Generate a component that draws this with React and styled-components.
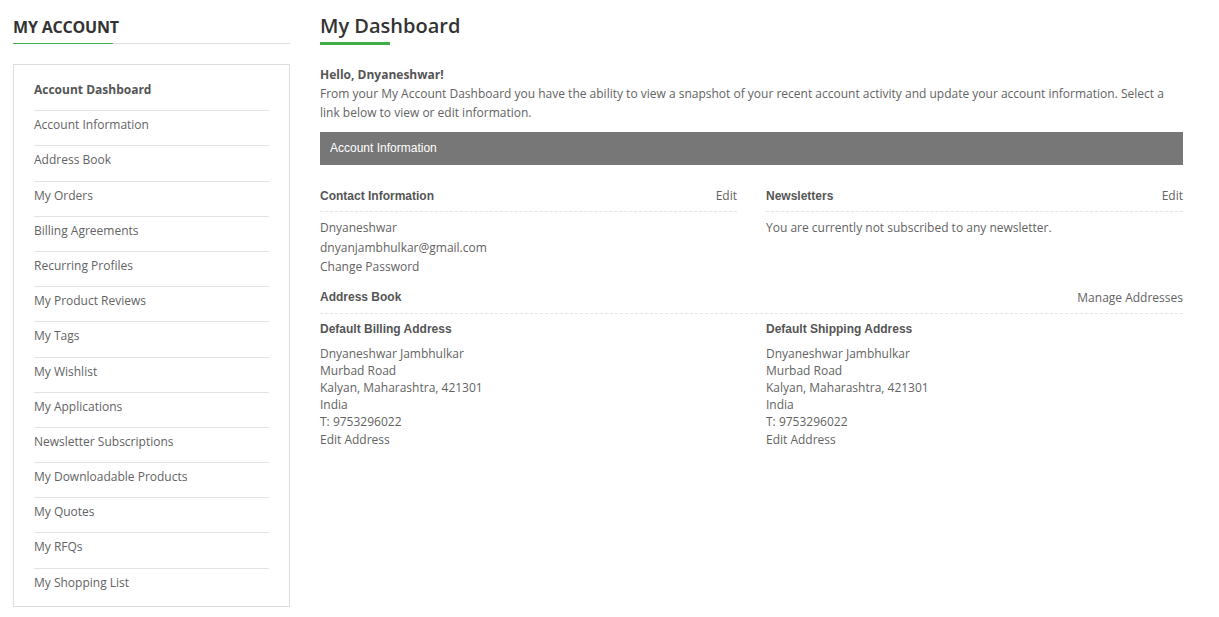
import styled, { createGlobalStyle } from "styled-components";

const GlobalStyle = createGlobalStyle`
  body {
    margin: 0;
    background: #fff;
    font-family: "Open Sans", "Liberation Sans", sans-serif;
    font-size: 12px;
    color: #636363;
  }
`;

const Page = styled.div`
  display: flex;
  align-items: flex-start;
  gap: 30px;
  padding: 0 36px 0 13px;
`;

const Sidebar = styled.aside`
  width: 277px;
  flex-shrink: 0;
`;

const SideTitle = styled.h2`
  margin: 0;
  padding-top: 17px;
  font-size: 16px;
  font-weight: 700;
  letter-spacing: -0.2px;
  color: #333;
  line-height: 20px;
  height: 26px;
  border-bottom: 1px solid #ddd;
  position: relative;
  &::after {
    content: "";
    position: absolute;
    left: 0;
    bottom: -1px;
    width: 100px;
    height: 1px;
    background: #3fae49;
  }
`;

const NavBox = styled.ul`
  list-style: none;
  margin: 20px 0 0;
  padding: 11px 20px 2px 20px;
  border: 1px solid #ddd;
`;

const NavItem = styled.li`
  height: 35.2px;
  line-height: 28px;
  border-bottom: ${(p) => (p.$last ? "none" : "1px solid #e3e3e3")};
  font-size: 12px;
  font-weight: ${(p) => (p.$active ? 700 : 400)};
  color: ${(p) => (p.$active ? "#555" : "#636363")};
  box-sizing: border-box;
`;

const Main = styled.main`
  flex: 1;
`;

const Title = styled.h1`
  margin: 0;
  padding-top: 12px;
  font-size: 20px;
  font-weight: 600;
  color: #333;
  line-height: 27px;
  &::after {
    content: "";
    display: block;
    width: 70px;
    height: 3px;
    margin-top: 3px;
    background: #3fae49;
  }
`;

const Welcome = styled.div`
  margin-top: 20px;
  line-height: 19px;
`;

const Hello = styled.strong`
  display: block;
  color: #555;
`;

const Intro = styled.p`
  margin: 0;
`;

const Bar = styled.div`
  margin-top: 10px;
  height: 33px;
  line-height: 33px;
  padding: 0 10px;
  background: #777;
  color: #fff;
  font-family: "Liberation Sans", Arial, sans-serif;
  font-size: 12px;
`;

const Columns = styled.div`
  display: grid;
  grid-template-columns: 1fr 1fr;
  column-gap: 29px;
  margin-top: 20px;
`;

const BoxHead = styled.div`
  display: flex;
  justify-content: space-between;
  align-items: center;
  height: 21px;
  padding-bottom: 5px;
  border-bottom: 1px dashed #e4e4e4;
`;

const HeadText = styled.h3`
  margin: 0;
  font-family: "Liberation Sans", Arial, sans-serif;
  font-size: 12px;
  font-weight: 700;
  color: #555;
`;

const HeadLink = styled.a`
  color: #636363;
  text-decoration: none;
`;

const Body = styled.div`
  padding-top: 6px;
  line-height: 19.5px;
`;

const Full = styled.div`
  grid-column: 1 / -1;
  margin-top: 10px;
`;

const SubHead = styled.h4`
  margin: 7px 0 0;
  font-family: "Liberation Sans", Arial, sans-serif;
  font-size: 12px;
  font-weight: 700;
  color: #555;
  line-height: 16px;
`;

const Address = styled.address`
  margin-top: 8px;
  font-style: normal;
  line-height: 17.2px;
`;

const navItems = [
  "Account Dashboard",
  "Account Information",
  "Address Book",
  "My Orders",
  "Billing Agreements",
  "Recurring Profiles",
  "My Product Reviews",
  "My Tags",
  "My Wishlist",
  "My Applications",
  "Newsletter Subscriptions",
  "My Downloadable Products",
  "My Quotes",
  "My RFQs",
  "My Shopping List",
];

function AddressBlock({ title }) {
  return (
    <div>
      <SubHead>{title}</SubHead>
      <Address>
        Dnyaneshwar Jambhulkar
        <br />
        Murbad Road
        <br />
        Kalyan, Maharashtra, 421301
        <br />
        India
        <br />
        T: 9753296022
        <br />
        Edit Address
      </Address>
    </div>
  );
}

export default function App() {
  return (
    <>
      <GlobalStyle />
      <Page>
        <Sidebar>
          <SideTitle>MY ACCOUNT</SideTitle>
          <NavBox>
            {navItems.map((item, i) => (
              <NavItem
                key={item}
                $active={i === 0}
                $last={i === navItems.length - 1}
              >
                {item}
              </NavItem>
            ))}
          </NavBox>
        </Sidebar>
        <Main>
          <Title>My Dashboard</Title>
          <Welcome>
            <Hello>Hello, Dnyaneshwar!</Hello>
            <Intro>
              From your My Account Dashboard you have the ability to view a
              snapshot of your recent account activity and update your account
              information. Select a link below to view or edit information.
            </Intro>
          </Welcome>
          <Bar>Account Information</Bar>
          <Columns>
            <div>
              <BoxHead>
                <HeadText>Contact Information</HeadText>
                <HeadLink href="#">Edit</HeadLink>
              </BoxHead>
              <Body>
                Dnyaneshwar
                <br />
                dnyanjambhulkar@gmail.com
                <br />
                Change Password
              </Body>
            </div>
            <div>
              <BoxHead>
                <HeadText>Newsletters</HeadText>
                <HeadLink href="#">Edit</HeadLink>
              </BoxHead>
              <Body>You are currently not subscribed to any newsletter.</Body>
            </div>
            <Full>
              <BoxHead>
                <HeadText>Address Book</HeadText>
                <HeadLink href="#">Manage Addresses</HeadLink>
              </BoxHead>
            </Full>
            <AddressBlock title="Default Billing Address" />
            <AddressBlock title="Default Shipping Address" />
          </Columns>
        </Main>
      </Page>
    </>
  );
}
